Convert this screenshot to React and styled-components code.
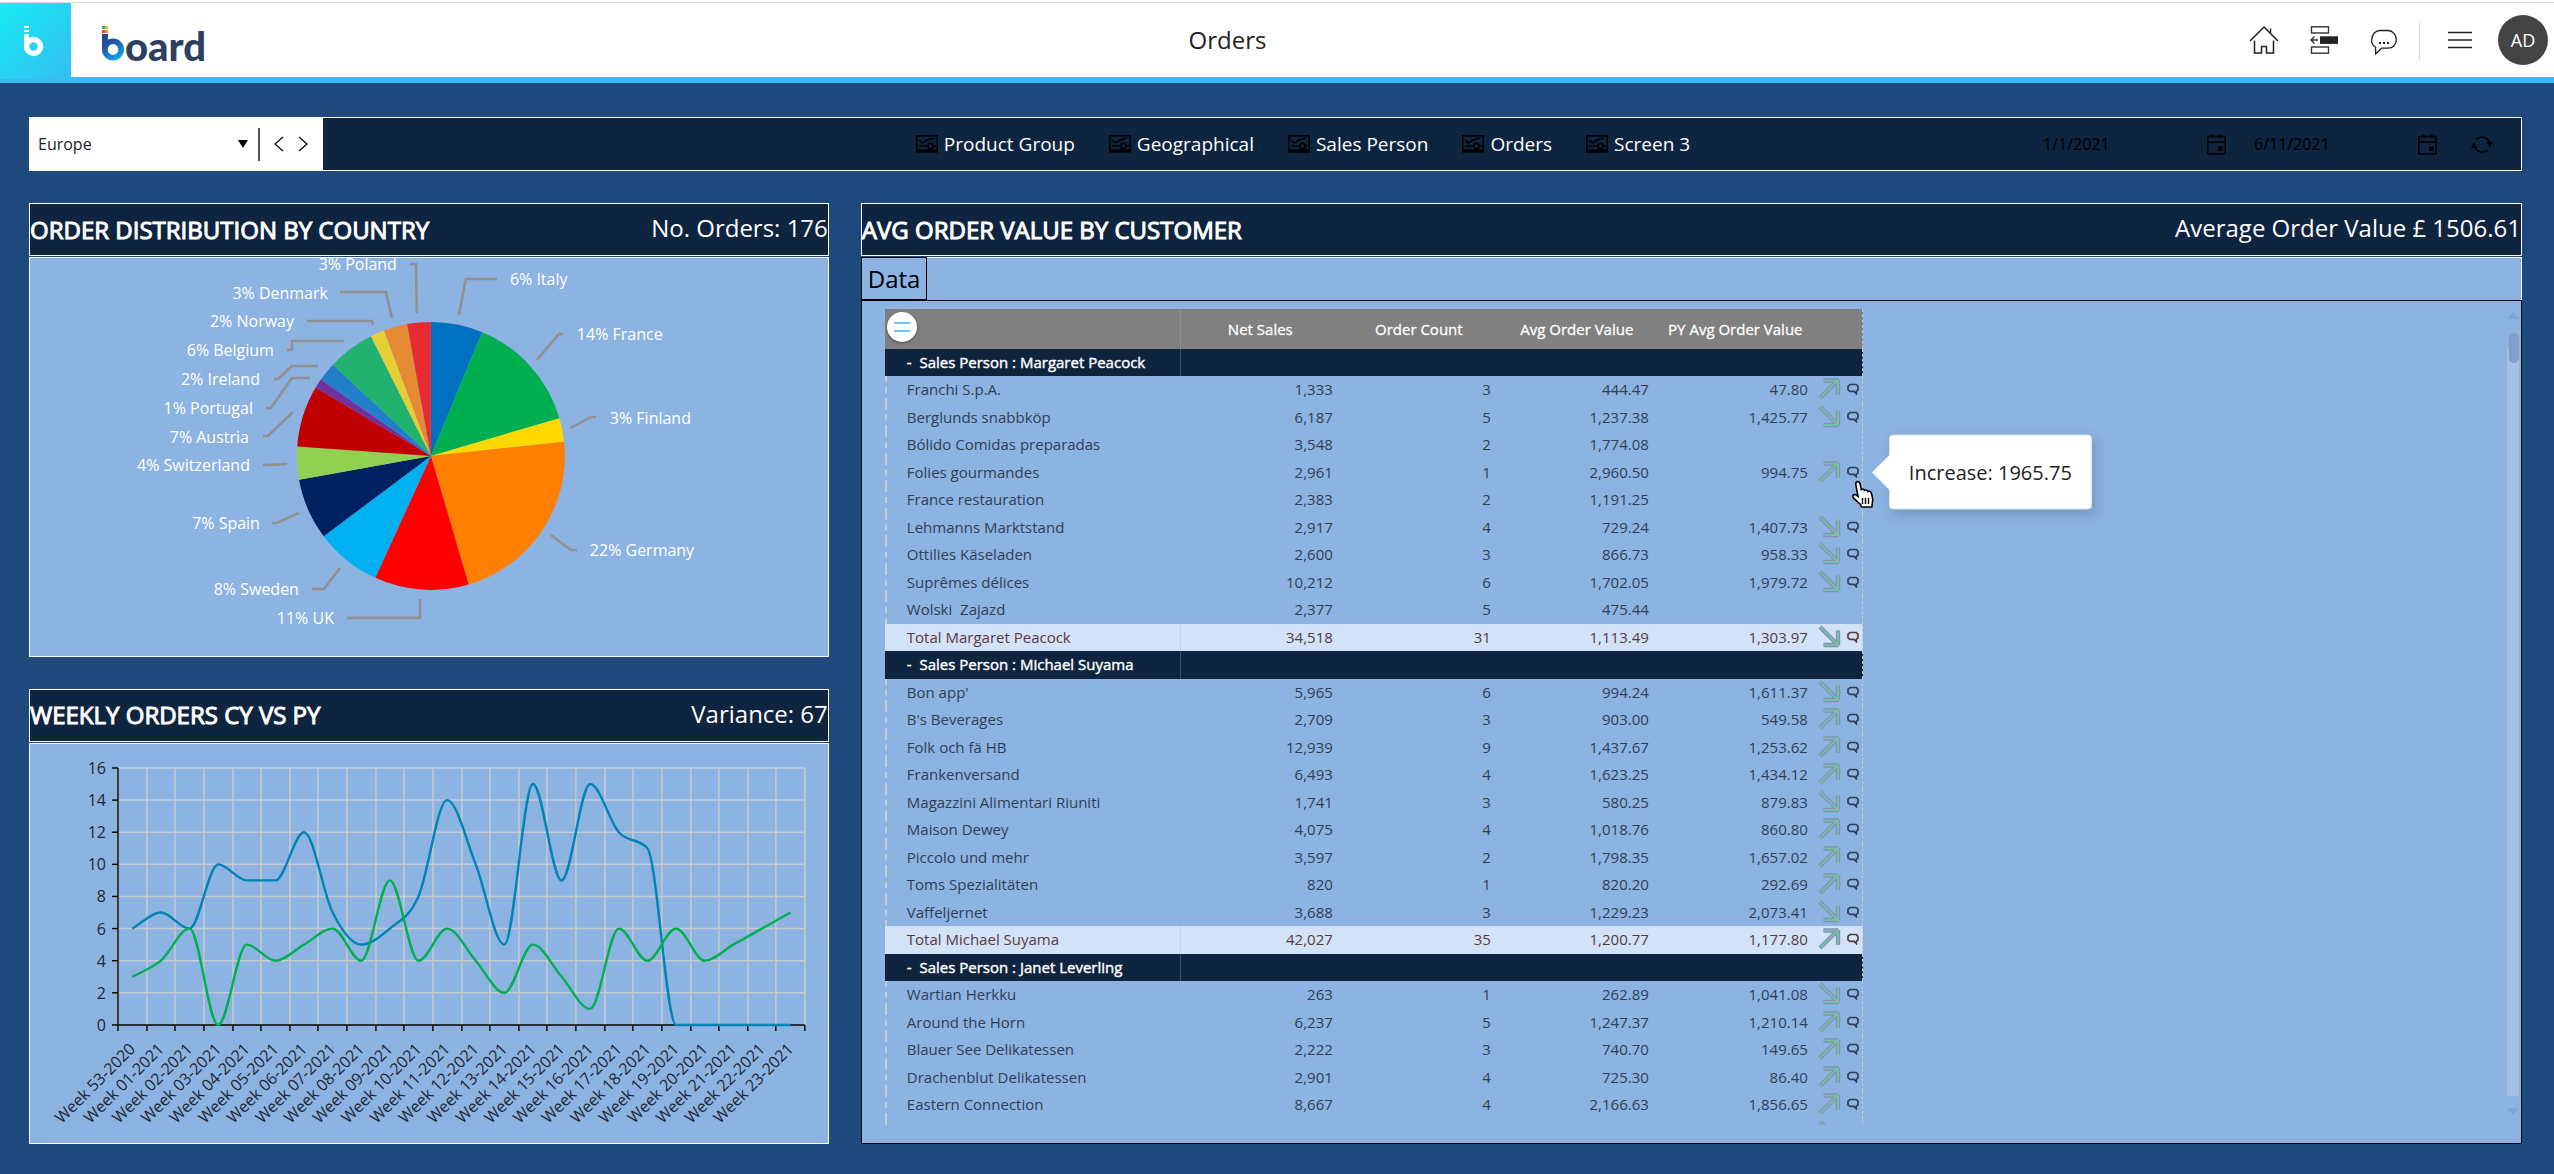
import React, { useState } from "react";
import styled, { createGlobalStyle } from "styled-components";

const people = [
  {
    name: "Margaret Peacock",
    rows: [
      ["Franchi S.p.A.", "1,333", "3", "444.47", "47.80", "up"],
      ["Berglunds snabbköp", "6,187", "5", "1,237.38", "1,425.77", "down"],
      ["Bólido Comidas preparadas", "3,548", "2", "1,774.08", "", ""],
      ["Folies gourmandes", "2,961", "1", "2,960.50", "994.75", "up"],
      ["France restauration", "2,383", "2", "1,191.25", "", ""],
      ["Lehmanns Marktstand", "2,917", "4", "729.24", "1,407.73", "down"],
      ["Ottilies Käseladen", "2,600", "3", "866.73", "958.33", "down"],
      ["Suprêmes délices", "10,212", "6", "1,702.05", "1,979.72", "down"],
      ["Wolski  Zajazd", "2,377", "5", "475.44", "", ""],
    ],
    total: ["34,518", "31", "1,113.49", "1,303.97", "down"],
  },
  {
    name: "Michael Suyama",
    rows: [
      ["Bon app'", "5,965", "6", "994.24", "1,611.37", "down"],
      ["B's Beverages", "2,709", "3", "903.00", "549.58", "up"],
      ["Folk och fä HB", "12,939", "9", "1,437.67", "1,253.62", "up"],
      ["Frankenversand", "6,493", "4", "1,623.25", "1,434.12", "up"],
      ["Magazzini Alimentari Riuniti", "1,741", "3", "580.25", "879.83", "down"],
      ["Maison Dewey", "4,075", "4", "1,018.76", "860.80", "up"],
      ["Piccolo und mehr", "3,597", "2", "1,798.35", "1,657.02", "up"],
      ["Toms Spezialitäten", "820", "1", "820.20", "292.69", "up"],
      ["Vaffeljernet", "3,688", "3", "1,229.23", "2,073.41", "down"],
    ],
    total: ["42,027", "35", "1,200.77", "1,177.80", "up"],
  },
  {
    name: "Janet Leverling",
    rows: [
      ["Wartian Herkku", "263", "1", "262.89", "1,041.08", "down"],
      ["Around the Horn", "6,237", "5", "1,247.37", "1,210.14", "up"],
      ["Blauer See Delikatessen", "2,222", "3", "740.70", "149.65", "up"],
      ["Drachenblut Delikatessen", "2,901", "4", "725.30", "86.40", "up"],
      ["Eastern Connection", "8,667", "4", "2,166.63", "1,856.65", "up"],
    ],
  },
];

// x, y and anchor place the label, line is the leader between label and slice
const countries = [
  { label: "6% Italy", orders: 11, color: "#0070c0", x: 480, y: 21, line: "429,57 436,21 467,21" },
  { label: "14% France", orders: 25, color: "#00b050", x: 547, y: 76, line: "507,102 529,76 533,76" },
  { label: "3% Finland", orders: 5, color: "#ffd800", x: 580, y: 160, line: "541,170 561,159 566,159" },
  { label: "22% Germany", orders: 39, color: "#ff7f00", x: 560, y: 292, line: "521,277 541,292 547,292" },
  { label: "11% UK", orders: 20, color: "#ff0000", x: 304, y: 360, end: true, line: "317,360 390,360 390,341" },
  { label: "8% Sweden", orders: 14, color: "#00b0f0", x: 269, y: 331, end: true, line: "282,331 294,331 310,310" },
  { label: "7% Spain", orders: 13, color: "#002060", x: 230, y: 265, end: true, line: "242,265 247,265 269,255" },
  { label: "4% Switzerland", orders: 7, color: "#92d050", x: 220, y: 207, end: true, line: "233,207 239,207 257,206" },
  { label: "7% Austria", orders: 13, color: "#c00000", x: 219, y: 179, end: true, line: "233,178 238,178 263,154" },
  { label: "1% Portugal", orders: 2, color: "#7030a0", x: 223, y: 150, end: true, line: "236,150 241,150 262,120 280,120" },
  { label: "2% Ireland", orders: 4, color: "#217ec8", x: 230, y: 121, end: true, line: "244,121 248,121 262,108 288,108" },
  { label: "6% Belgium", orders: 10, color: "#22b270", x: 244, y: 92, end: true, line: "257,92 262,92 262,83 314,83" },
  { label: "2% Norway", orders: 3, color: "#e4cf35", x: 264, y: 63, end: true, line: "277,63 342,63 343,67" },
  { label: "3% Denmark", orders: 5, color: "#e68a33", x: 298, y: 35, end: true, line: "310,34 356,34 362,60" },
  { label: "3% Poland", orders: 5, color: "#e62b33", x: 367, y: 6, end: true, line: "380,6 386,6 387,55" },
];

const currentYear = [6, 7, 6, 10, 9, 9, 12, 7, 5, 6, 8, 14, 10, 5, 15, 9, 15, 12, 11, 0, 0, 0, 0, 0];
const previousYear = [3, 4, 6, 0, 5, 4, 5, 6, 4, 9, 4, 6, 4, 2, 5, 3, 1, 6, 4, 6, 4, 5, 6, 7];
const weeks = currentYear.map((_, i) =>
  i === 0 ? "Week 53-2020" : `Week ${String(i).padStart(2, "0")}-2021`
);

const screens = ["Product Group", "Geographical", "Sales Person", "Orders", "Screen 3"];

const PieChart = () => {
  const cx = 401;
  const cy = 198;
  const r = 134;
  const total = countries.reduce((sum, c) => sum + c.orders, 0);
  const point = (n) => {
    const a = (n / total) * 2 * Math.PI;
    return `${cx + r * Math.sin(a)},${cy - r * Math.cos(a)}`;
  };
  let from = 0;

  return (
    <Chart viewBox="0 0 798 398" role="img" aria-label="Order distribution by country">
      {countries.map((c) => {
        const start = from;
        from += c.orders;
        return (
          <g key={c.label}>
            <path
              d={`M${cx},${cy} L${point(start)} A${r},${r} 0 0 1 ${point(from)} Z`}
              fill={c.color}
            />
            <polyline points={c.line} fill="none" stroke="#919191" strokeWidth="2.6" />
            <PieLabel x={c.x} y={c.y + 6} textAnchor={c.end ? "end" : "start"}>
              {c.label}
            </PieLabel>
          </g>
        );
      })}
    </Chart>
  );
};

// monotone cubic interpolation, so that the curve never overshoots a week
const smoothPath = (pts) => {
  const n = pts.length;
  const slope = [];
  for (let i = 0; i < n - 1; i++) {
    slope.push((pts[i + 1][1] - pts[i][1]) / (pts[i + 1][0] - pts[i][0]));
  }
  const tan = pts.map((_, i) => {
    if (i === 0) return slope[0];
    if (i === n - 1) return slope[n - 2];
    const a = slope[i - 1];
    const b = slope[i];
    if (a * b <= 0) return 0;
    return Math.sign(a) * Math.min(Math.abs(a), Math.abs(b), Math.abs(a + b) / 4) * 2;
  });
  let d = `M${pts[0][0]},${pts[0][1]}`;
  for (let i = 0; i < n - 1; i++) {
    const dx = (pts[i + 1][0] - pts[i][0]) / 3;
    d += ` C${pts[i][0] + dx},${pts[i][1] + tan[i] * dx}`;
    d += ` ${pts[i + 1][0] - dx},${pts[i + 1][1] - tan[i + 1] * dx}`;
    d += ` ${pts[i + 1][0]},${pts[i + 1][1]}`;
  }
  return d;
};

const LineChart = () => {
  const left = 88;
  const right = 775;
  const top = 24;
  const bottom = 281;
  const step = (right - left) / weeks.length;
  const toY = (v) => bottom - (v / 16) * (bottom - top);
  const toPoints = (values) => values.map((v, i) => [left + step * (i + 0.5), toY(v)]);
  const columns = Array.from({ length: weeks.length + 1 }, (_, i) => Math.round(left + step * i));
  const ticks = [0, 2, 4, 6, 8, 10, 12, 14, 16];

  return (
    <Chart viewBox="0 0 798 399" role="img" aria-label="Weekly orders, current year and previous year">
      {columns.map((x) => (
        <g key={x}>
          <line x1={x} x2={x} y1={top} y2={bottom} stroke="#c6c9ce" strokeWidth="1.5" />
          <line x1={x} x2={x} y1={bottom} y2={bottom + 6} stroke="#000" strokeWidth="1.4" />
        </g>
      ))}
      {ticks.map((t) => (
        <g key={t}>
          <line x1={left} x2={right} y1={toY(t)} y2={toY(t)} stroke="#c6c9ce" strokeWidth="1.5" />
          <line x1={left - 6} x2={left} y1={toY(t)} y2={toY(t)} stroke="#000" strokeWidth="1.4" />
          <AxisLabel x={left - 12} y={toY(t) + 6} textAnchor="end">
            {t}
          </AxisLabel>
        </g>
      ))}
      <path d={`M${left},${top} V${bottom} H${right}`} fill="none" stroke="#000" strokeWidth="1.4" />
      <path d={smoothPath(toPoints(currentYear))} fill="none" stroke="#0084b4" strokeWidth="2.4" />
      <path d={smoothPath(toPoints(previousYear))} fill="none" stroke="#00b050" strokeWidth="2.4" />
      {weeks.map((w, i) => {
        const x = left + step * (i + 0.5) + 4;
        return (
          <AxisLabel key={w} x={x} y={306} textAnchor="end" transform={`rotate(-45 ${x} 306)`}>
            {w}
          </AxisLabel>
        );
      })}
    </Chart>
  );
};

const TileLogo = () => (
  <svg width="24" height="34" viewBox="0 0 24 34" aria-hidden="true">
    <g fill="#fff">
      <rect x="1" y="1" width="5" height="2" />
      <rect x="1" y="5" width="5" height="2" />
      <rect x="1" y="9" width="5" height="12" />
    </g>
    <circle cx="10.5" cy="21.5" r="7" fill="none" stroke="#fff" strokeWidth="5.4" />
  </svg>
);

const BrandMark = () => (
  <svg width="23" height="36" viewBox="0 0 23 36" aria-hidden="true">
    <defs>
      <linearGradient id="brand" x1="0" y1="10" x2="16" y2="36" gradientUnits="userSpaceOnUse">
        <stop offset="0" stopColor="#2a3f8c" />
        <stop offset="0.45" stopColor="#1e5fae" />
        <stop offset="1" stopColor="#08b8f4" />
      </linearGradient>
    </defs>
    <rect x="0" y="0" width="3" height="3" fill="#3fae49" />
    <rect x="3" y="0" width="3" height="3" fill="#c3cf2f" />
    <rect x="0" y="4" width="3" height="3" fill="#e2452c" />
    <rect x="3" y="4" width="3" height="3" fill="#f2902a" />
    <rect x="0" y="8" width="6" height="15" fill="url(#brand)" />
    <circle cx="11" cy="23.5" r="8.2" fill="none" stroke="url(#brand)" strokeWidth="5.6" />
  </svg>
);

const HomeIcon = () => (
  <svg width="30" height="30" viewBox="0 0 30 30" fill="none" stroke="#222" strokeWidth="1.5" aria-hidden="true">
    <path d="M1 16 L15 2 L29 16" />
    <path d="M21.5 3.5 V8" />
    <path d="M5.5 15.5 V28 H12.5 V21.5 H17.5 V28 H24.5 V15.5" />
  </svg>
);

const FlowIcon = () => (
  <svg width="30" height="30" viewBox="0 0 30 30" fill="none" stroke="#333" strokeWidth="1.4" aria-hidden="true">
    <rect x="2.5" y="1.8" width="17" height="6.2" />
    <rect x="2.5" y="22" width="17" height="6.2" />
    <rect x="11" y="11.3" width="18" height="7.6" fill="#222" stroke="none" />
    <path d="M9 15 H2 M5.5 11.5 L2 15 L5.5 18.5" />
  </svg>
);

const ChatIcon = () => (
  <svg width="30" height="30" viewBox="0 0 30 30" fill="none" stroke="#222" strokeWidth="1.3" aria-hidden="true">
    <path d="M6.5 22 C3.5 20.5 2.5 18 2.7 15 C3 9 6.5 5.5 11 5.5 H19 C24 5.5 27.3 10 27.3 14.5 C27.3 20 23.5 23.2 19 23.2 H12.5 L6.7 29 Z" />
    <path d="M10 18 h2 M14 18 h2 M18 18 h2" strokeWidth="2.2" />
  </svg>
);

const MenuIcon = () => (
  <svg width="24" height="18" viewBox="0 0 24 18" stroke="#222" strokeWidth="1.3" aria-hidden="true">
    <path d="M0 1.5 H24 M0 9 H24 M0 16.5 H24" />
  </svg>
);

const ScreenIcon = () => (
  <svg width="22" height="18" viewBox="0 0 22 18" fill="none" stroke="#000" strokeWidth="1.6" aria-hidden="true">
    <rect x="0.8" y="0.8" width="20.4" height="16" />
    <path d="M1 15.2 H21" strokeWidth="1.8" />
    <path d="M3 5 L6.5 8 L11 5 L18 3" />
    <circle cx="14.5" cy="11" r="2.6" />
    <path d="M3 11 H12 M17 11 H20" />
  </svg>
);

const CalendarIcon = () => (
  <svg width="19" height="21" viewBox="0 0 19 21" fill="none" stroke="#000" strokeWidth="1.5" aria-hidden="true">
    <rect x="0.8" y="2.6" width="17.4" height="17.4" rx="1" />
    <path d="M1 8 H18" />
    <path d="M5.5 0.8 V4 M13.5 0.8 V4" strokeWidth="2.4" />
    <rect x="11" y="12.5" width="4.5" height="4.5" fill="#000" stroke="none" />
  </svg>
);

const RefreshIcon = () => (
  <svg width="22" height="19" viewBox="0 0 22 19" fill="none" stroke="#000" strokeWidth="1.2" aria-hidden="true">
    <path d="M5 4.5 A8.4 8.4 0 0 1 18.6 7.5" />
    <path d="M17 15 A8.4 8.4 0 0 1 3.4 11.5" />
    <path d="M15.5 7 H22 L19 12.5 Z M0 13 H6 L3 7 Z" fill="#000" stroke="none" />
  </svg>
);

const Trend = ({ dir }) => {
  const d = dir === "up" ? "M2 21 L19 4 M5.5 3.5 H20.5 M20 3 V18" : "M2 2 L19 19 M5.5 20 H20.5 M20 20.5 V5.5";
  return (
    <svg width="23" height="24" viewBox="0 0 23 24" fill="none" role="img" aria-label={dir}>
      <path d={d} stroke="#8a8fb4" strokeWidth="4.4" />
      <path d={d} stroke="#72c0a6" strokeWidth="2" />
    </svg>
  );
};

const NoteIcon = () => (
  <svg width="12" height="12" viewBox="0 0 12 12" fill="none" stroke="currentColor" strokeWidth="1.7" aria-hidden="true">
    <path d="M3 1.5 H9.3 L11 3.3 V6.8 L9.3 8.4 V10.6 L7 8.4 H3 L1 6.8 V3.3 Z" />
  </svg>
);

const HandCursor = () => (
  <Hand width="24" height="29" viewBox="0 0 24 29" aria-hidden="true">
    <path
      d="M5.5 2 C7 1 8.5 1.6 9 3.5 L10.2 9.5 C11 8.6 13 8.8 13.4 10.4 C14.4 9.6 16.2 9.9 16.7 11.5 C18 10.7 19.8 11.3 20.3 13 L21.5 17.5 C22 20 21.8 21.5 21.3 23 L20.8 27 H10.5 L9.5 24.5 L3 18.6 C1.2 17 1.6 15 3.2 14.6 C4.6 14.3 5.6 15 7 16.3 L4.7 4 C4.6 3 4.8 2.4 5.5 2 Z"
      fill="#fff"
      stroke="#000"
      strokeWidth="1.6"
    />
    <path d="M11.5 18 V24 M14.5 18 V24 M17.5 18 V24" stroke="#000" strokeWidth="1.4" />
  </Hand>
);

const DataRow = ({ cells, total }) => {
  const [name, sales, count, avg, prev, trend] = cells;
  const hovered = name === "Folies gourmandes";
  return (
    <Row $total={total}>
      <NameCell>{name}</NameCell>
      <Cell>{sales}</Cell>
      <Cell>{count}</Cell>
      <Cell>{avg}</Cell>
      <Cell>{prev}</Cell>
      <IconCell>{trend && <Trend dir={trend} />}</IconCell>
      <IconCell>
        {prev && (
          <Note>
            <NoteButton type="button" aria-label={`Note on ${name}`}>
              <NoteIcon />
            </NoteButton>
            {hovered && <Tooltip role="tooltip">Increase: 1965.75</Tooltip>}
            {hovered && <HandCursor />}
          </Note>
        )}
      </IconCell>
    </Row>
  );
};

const App = () => {
  const [region, setRegion] = useState("Europe");
  const [from, setFrom] = useState("1/1/2021");
  const [to, setTo] = useState("6/11/2021");

  return (
    <Page>
      <GlobalStyle />
      <Header>
        <Tile href="#home" aria-label="Start page">
          <TileLogo />
        </Tile>
        <Brand href="#board">
          <BrandMark />
          <span>oard</span>
        </Brand>
        <Title>Orders</Title>
        <Actions>
          <IconButton type="button" aria-label="Home">
            <HomeIcon />
          </IconButton>
          <IconButton type="button" aria-label="Procedures">
            <FlowIcon />
          </IconButton>
          <IconButton type="button" aria-label="Chat">
            <ChatIcon />
          </IconButton>
          <Divider />
          <IconButton type="button" aria-label="Menu">
            <MenuIcon />
          </IconButton>
          <Avatar type="button">AD</Avatar>
        </Actions>
      </Header>

      <Main>
        <Toolbar>
          <Selector>
            <Region aria-label="Region" value={region} onChange={(e) => setRegion(e.target.value)}>
              <option>Europe</option>
            </Region>
            <Caret />
            <Bar />
            <IconButton type="button" aria-label="Previous">
              <svg width="10" height="16" viewBox="0 0 10 16" fill="none" stroke="#000" strokeWidth="1.2">
                <path d="M9 1 L1 8 L9 15" />
              </svg>
            </IconButton>
            <IconButton type="button" aria-label="Next">
              <svg width="10" height="16" viewBox="0 0 10 16" fill="none" stroke="#000" strokeWidth="1.2">
                <path d="M1 1 L9 8 L1 15" />
              </svg>
            </IconButton>
          </Selector>
          <Nav>
            {screens.map((s) => (
              <NavLink href="#screen" key={s}>
                <ScreenIcon />
                {s}
              </NavLink>
            ))}
          </Nav>
          <Dates>
            <DateField>
              <DateInput aria-label="From" value={from} onChange={(e) => setFrom(e.target.value)} />
              <CalendarIcon />
            </DateField>
            <DateField>
              <DateInput aria-label="To" value={to} onChange={(e) => setTo(e.target.value)} />
              <CalendarIcon />
            </DateField>
            <RefreshButton type="button" aria-label="Refresh">
              <RefreshIcon />
            </RefreshButton>
          </Dates>
        </Toolbar>

        <Panels>
          <Column>
            <Panel>
              <PanelHead>
                <PanelTitle>ORDER DISTRIBUTION BY COUNTRY</PanelTitle>
                <PanelValue>No. Orders: 176</PanelValue>
              </PanelHead>
              <PanelBody>
                <PieChart />
              </PanelBody>
            </Panel>
            <Panel>
              <PanelHead>
                <PanelTitle>WEEKLY ORDERS CY VS PY</PanelTitle>
                <PanelValue>Variance: 67</PanelValue>
              </PanelHead>
              <PanelBody>
                <LineChart />
              </PanelBody>
            </Panel>
          </Column>

          <Panel>
            <PanelHead>
              <PanelTitle>AVG ORDER VALUE BY CUSTOMER</PanelTitle>
              <PanelValue>Average Order Value £ 1506.61</PanelValue>
            </PanelHead>
            <Tabs>
              <Tab type="button">Data</Tab>
            </Tabs>
            <DataArea>
              <Viewport>
                <Table>
                  <colgroup>
                    <col width="296" />
                    <col width="159" />
                    <col width="158" />
                    <col width="158" />
                    <col width="159" />
                    <col width="28" />
                    <col width="20" />
                  </colgroup>
                  <thead>
                    <tr>
                      <HeadCell>
                        <TableMenu type="button" aria-label="Table menu">
                          <svg width="16" height="12" viewBox="0 0 16 12" stroke="#33bdf2" strokeWidth="1.6">
                            <path d="M0 2 H16 M0 10 H16" />
                          </svg>
                        </TableMenu>
                      </HeadCell>
                      <HeadCell>Net Sales</HeadCell>
                      <HeadCell>Order Count</HeadCell>
                      <HeadCell>Avg Order Value</HeadCell>
                      <HeadCell>PY Avg Order Value</HeadCell>
                      <HeadCell />
                      <HeadCell />
                    </tr>
                  </thead>
                  <tbody>
                    {people.map((p) => (
                      <React.Fragment key={p.name}>
                        <Row $group>
                          <NameCell>{`-  Sales Person : ${p.name}`}</NameCell>
                          <Cell />
                          <Cell />
                          <Cell />
                          <Cell />
                          <Cell />
                          <Cell />
                        </Row>
                        {p.rows.map((r) => (
                          <DataRow key={r[0]} cells={r} />
                        ))}
                        {p.total && <DataRow cells={[`Total ${p.name}`, ...p.total]} total />}
                      </React.Fragment>
                    ))}
                    <DataRow cells={["", "", "", "", "", "down"]} />
                  </tbody>
                </Table>
              </Viewport>
              <Scrollbar aria-hidden="true">
                <ScrollArrow $up />
                <Track>
                  <Thumb />
                </Track>
                <ScrollArrow />
              </Scrollbar>
            </DataArea>
          </Panel>
        </Panels>
      </Main>
    </Page>
  );
};

const GlobalStyle = createGlobalStyle`
  * {
    box-sizing: border-box;
  }
  body {
    margin: 0;
    background: #1f497d;
    font-family: "Open Sans", "Noto Sans", sans-serif;
  }
  button, input, select {
    font-family: inherit;
  }
`;

const Page = styled.div`
  min-height: 100vh;
  background: #1f497d;
`;

const Header = styled.header`
  display: flex;
  align-items: stretch;
  height: 83px;
  padding-top: 3px;
  border-bottom: 6px solid #33bdf2;
  background: linear-gradient(#fff 2px, #dcdcdc 2px, #dcdcdc 3px, #fff 3px);
`;

const Tile = styled.a`
  display: flex;
  justify-content: center;
  width: 71px;
  height: 76px;
  padding: 22px 2px 0 0;
  background: linear-gradient(135deg, #18ecf2, #33bdf2);
`;

const Brand = styled.a`
  display: flex;
  align-items: flex-start;
  padding: 23px 0 0 31px;
  color: #2e4061;
  text-decoration: none;
  span {
    font: 900 40px/40px Lato, sans-serif;
  }
`;

const Title = styled.h1`
  flex: 1;
  margin: 0;
  color: #222;
  font-size: 24px;
  font-weight: 400;
  line-height: 74px;
  text-align: center;
`;

const Actions = styled.div`
  display: flex;
  align-items: center;
  gap: 30px;
  padding-right: 6px;
`;

const IconButton = styled.button`
  display: flex;
  padding: 0;
  border: none;
  background: none;
  cursor: pointer;
`;

const RefreshButton = styled(IconButton)`
  margin-left: 6px;
`;

const Divider = styled.div`
  width: 1px;
  height: 39px;
  margin: 0 -2px 0 -10px;
  background: #d8d8d8;
`;

const Avatar = styled.button`
  width: 50px;
  height: 50px;
  margin-left: -4px;
  padding: 0;
  border: none;
  border-radius: 50%;
  background: #444;
  color: #fff;
  font-size: 18px;
`;

const Main = styled.main`
  padding: 34px 32px 31px 29px;
`;

const Toolbar = styled.div`
  display: flex;
  align-items: center;
  height: 54px;
  margin-bottom: 32px;
  border: 1px solid #fff;
  background: #0f243e;
`;

const Selector = styled.div`
  display: flex;
  align-items: center;
  gap: 14px;
  width: 293px;
  height: 100%;
  padding: 0 15px 0 4px;
  background: #fff;
`;

const Region = styled.select`
  flex: 1;
  padding: 4px;
  border: none;
  background: none;
  appearance: none;
  color: #222;
  font-size: 16px;
`;

const Caret = styled.span`
  margin-right: -4px;
  border: 5px solid transparent;
  border-top: 8px solid #000;
  border-bottom: none;
  pointer-events: none;
`;

const Bar = styled.span`
  width: 2px;
  height: 33px;
  background: #555;
`;

const Nav = styled.nav`
  display: flex;
  flex: 1;
  justify-content: center;
  gap: 34px;
  padding-left: 240px;
`;

const NavLink = styled.a`
  display: flex;
  align-items: center;
  gap: 6px;
  color: #fff;
  font-size: 19px;
  line-height: 26px;
  text-decoration: none;
  white-space: nowrap;
`;

const Dates = styled.div`
  display: flex;
  align-items: center;
  gap: 28px;
  padding-right: 28px;
`;

const DateField = styled.div`
  display: flex;
  align-items: center;
  width: 183px;
`;

const DateInput = styled.input`
  flex: 1;
  min-width: 0;
  padding: 0;
  border: none;
  outline: none;
  background: none;
  color: #000;
  font-size: 16px;
`;

const Panels = styled.div`
  display: grid;
  grid-template-columns: 13fr 27fr;
  gap: 32px;
`;

const Column = styled.div`
  display: flex;
  flex-direction: column;
  gap: 32px;
  min-width: 0;
`;

const Panel = styled.section`
  display: flex;
  flex-direction: column;
  min-width: 0;
`;

const PanelHead = styled.div`
  display: flex;
  align-items: center;
  justify-content: space-between;
  height: 53px;
  margin-bottom: 1px;
  border: 1px solid #fff;
  background: #0f243e;
  color: #fff;
`;

const PanelTitle = styled.h2`
  margin: 0;
  font-size: 24px;
  font-weight: 400;
  line-height: 32px;
  -webkit-text-stroke: 1px #fff;
`;

const PanelValue = styled.span`
  padding-bottom: 3px;
  font-size: 24px;
  line-height: 32px;
`;

const PanelBody = styled.div`
  border: 1px solid #fff;
  background: #8db3e2;
`;

const Chart = styled.svg`
  display: block;
  width: 100%;
  overflow: visible;
`;

const PieLabel = styled.text`
  fill: #fff;
  font-size: 16px;
`;

const AxisLabel = styled.text`
  fill: #1d2733;
  font-size: 16px;
`;

const Tabs = styled.div`
  display: flex;
  border: 1px solid #fff;
  border-width: 1px 1px 0 0;
  background: #8db3e2;
`;

const Tab = styled.button`
  height: 43px;
  margin-top: -1px;
  padding: 0 6px;
  border: 1px solid #000;
  background: none;
  color: #000;
  font-size: 24px;
  line-height: 40px;
`;

const DataArea = styled.div`
  display: flex;
  flex: 1;
  padding: 8px 2px 17px 23px;
  border: 1px solid #000;
  background: #8db3e2;
`;

const Viewport = styled.div`
  flex: 1;
  height: 816px;
  overflow: hidden;
`;

const Table = styled.table`
  width: 978px;
  table-layout: fixed;
  border-spacing: 0;
  color: #2f4055;
  font-size: 15px;
  line-height: 20px;

  tbody tr {
    height: 27px;
  }
  tbody tr:nth-child(even) {
    height: 28px;
  }
  th:first-child,
  td:first-child {
    border-right: 1px solid rgba(141, 179, 226, 0.3);
  }
  td:first-child {
    border-left: 2px dashed rgba(205, 208, 214, 0.8);
  }
  td:last-child,
  th:last-child {
    border-right: 1px dashed #c3c8d0;
  }
`;

const HeadCell = styled.th`
  height: 40px;
  padding: 0 2px;
  background: #808080;
  color: #fff;
  font-weight: 400;
  -webkit-text-stroke: 0.3px #fff;
`;

const Row = styled.tr`
  background: ${(p) => (p.$group ? "#0f243e" : p.$total ? "#d2e2f7" : "none")};
  color: ${(p) => (p.$group ? "#fff" : p.$total ? "#5a3844" : "inherit")};
  -webkit-text-stroke: ${(p) => (p.$group ? "0.4px #fff" : "0")};

  td:first-child {
    ${(p) => (p.$group || p.$total) && "border-left-color: transparent;"}
  }
`;

const Cell = styled.td`
  padding: 0 7px 2px 0;
  text-align: right;
`;

const NameCell = styled.td`
  padding: 0 0 2px 20px;
  white-space: pre;
`;

const IconCell = styled.td`
  padding: 0 0 2px 3px;
  svg {
    display: block;
  }
`;

const Note = styled.div`
  position: relative;
`;

const NoteButton = styled.button`
  display: block;
  padding: 0 0 0 1px;
  border: none;
  background: none;
  color: inherit;
  cursor: pointer;
`;

const Tooltip = styled.span`
  position: absolute;
  top: 50%;
  left: 43px;
  transform: translateY(-50%);
  padding: 23px 19px;
  border: 1px solid #dde3ea;
  border-radius: 4px;
  background: #fff;
  box-shadow: 3px 5px 12px rgba(15, 36, 62, 0.2);
  color: #222;
  font-size: 20px;
  line-height: 27px;
  white-space: nowrap;

  &::before {
    content: "";
    position: absolute;
    top: 19px;
    left: -18px;
    border: 18px solid transparent;
    border-right-color: #fff;
    border-left: none;
  }
`;

const Hand = styled.svg`
  position: absolute;
  top: 14px;
  left: 5px;
`;

const TableMenu = styled.button`
  display: flex;
  align-items: center;
  justify-content: center;
  width: 30px;
  height: 30px;
  margin-bottom: 4px;
  padding: 0;
  border: none;
  border-radius: 50%;
  background: #fff;
  box-shadow: 0 1px 3px rgba(0, 0, 0, 0.4);
`;

const Scrollbar = styled.div`
  display: flex;
  flex-direction: column;
  align-items: center;
  width: 12px;
  padding: 3px 0 11px;
`;

const ScrollArrow = styled.span`
  border: 6px solid transparent;
  border-width: ${(p) => (p.$up ? "0 6px 7px" : "7px 6px 0")};
  border-${(p) => (p.$up ? "bottom" : "top")}-color: #79a9dc;
`;

const Track = styled.div`
  flex: 1;
  width: 12px;
  margin: 14px 0 12px;
  background: linear-gradient(transparent 15px, #a4bee5 15px);
`;

const Thumb = styled.div`
  width: 10px;
  height: 30px;
  margin-left: 2px;
  border-radius: 5px;
  background: #819fc8;
`;

export default App;
